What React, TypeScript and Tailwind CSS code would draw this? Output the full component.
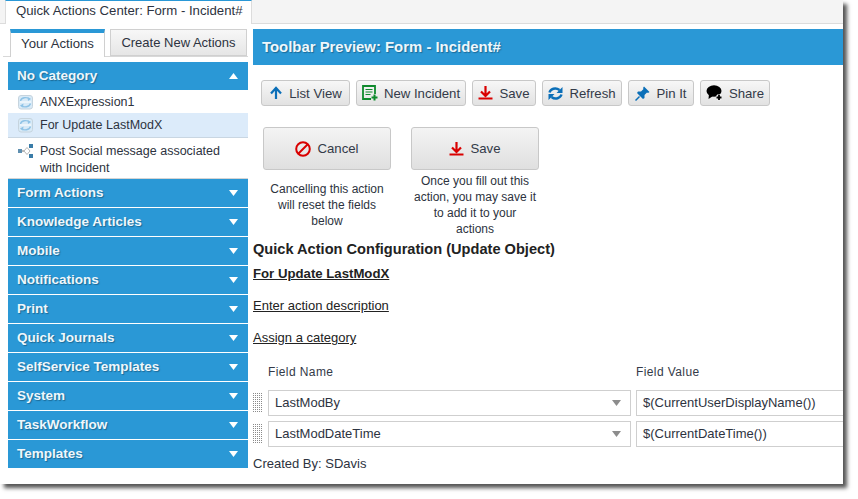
import React from "react";

const Tri = ({ up = false }: { up?: boolean }) => (
  <svg width="9" height="6" viewBox="0 0 9 6" className="shrink-0">
    <path d={up ? "M4.500 0L9 6H0Z" : "M0 0H9L4.500 6Z"} fill="#fff" />
  </svg>
);

const SyncIcon = () => (
  <svg width="15" height="16" viewBox="0 0 15 16" className="shrink-0">
    <rect x="0.500" y="1.500" width="14" height="13.500" rx="2.500" fill="#d8eaf7" stroke="#c6d4de" />
    <path d="M2.500 7C3 3.500 8.500 2.500 12 5M12.500 9.500C11.500 13 6 14 3 11.500" fill="none" stroke="#8fc3e6" strokeWidth="1.400" />
    <path d="M2 8H13" stroke="#fff" strokeWidth="1" />
    <path d="M9.500 3L13 5L10 7M5.500 9.500L2 11.500L5 13.500" fill="#8fc3e6" />
  </svg>
);

const WorkflowIcon = () => (
  <svg width="16" height="14" viewBox="0 0 16 14" className="shrink-0">
    <rect x="0" y="5" width="4" height="4" fill="#5f8fb0" />
    <path d="M4 7H6" stroke="#777" />
    <path d="M9 3.500L12 7L9 10.500L6 7Z" fill="#fff" stroke="#b5b5b5" />
    <rect x="11" y="0" width="4" height="4" fill="#3a7ca8" />
    <rect x="11" y="10" width="4" height="4" fill="#3a7ca8" />
  </svg>
);

const UpArrow = () => (
  <svg width="14" height="14" viewBox="0 0 14 14">
    <path d="M7 13V2.500M2 7.500L7 2L12 7.500" fill="none" stroke="#0b6fb8" strokeWidth="2.200" />
  </svg>
);

const NewIcon = () => (
  <svg width="16" height="16" viewBox="0 0 16 16">
    <path d="M9 14H1V1H13V9" fill="none" stroke="#0f8a2d" strokeWidth="1.800" />
    <path d="M3.500 4.500H10.500M3.500 7H10.500M3.500 9.500H8.500" stroke="#0f8a2d" strokeWidth="1.200" />
    <path d="M12.500 9.500V15.500M9.500 12.500H15.500" stroke="#0f8a2d" strokeWidth="2" />
  </svg>
);

const SaveIcon = () => (
  <svg width="15" height="14" viewBox="0 0 15 14">
    <path d="M7.500 0V9M3 5.500L7.500 10L12 5.500" fill="none" stroke="#d90000" strokeWidth="2.200" />
    <path d="M0.500 12.500H14.500" fill="none" stroke="#d90000" strokeWidth="2" />
  </svg>
);

const RefreshIcon = () => (
  <svg width="15" height="15" viewBox="0 0 15 15">
    <path d="M1.500 6.500C2.500 3 7.500 0.800 11.500 4" fill="none" stroke="#0b6fb8" strokeWidth="2.400" />
    <path d="M13.500 8.500C12.500 12 7.500 14.200 3.500 11" fill="none" stroke="#0b6fb8" strokeWidth="2.400" />
    <path d="M14.500 1V7H8.500Z M0.500 14V8H6.500Z" fill="#0b6fb8" />
  </svg>
);

const PinIcon = () => (
  <svg width="15" height="15" viewBox="0 0 15 15">
    <path d="M9 0.500L14.500 6L13 7L12 6.500L9.500 9L9.500 12L8 13L2 7L3 5.500L6 5.500L8.500 3L8 2Z" fill="#0b6fb8" />
    <path d="M4.500 10.500L0.500 14.500" stroke="#0b6fb8" strokeWidth="1.500" />
  </svg>
);

const ShareIcon = () => (
  <svg width="17" height="16" viewBox="0 0 17 16">
    <ellipse cx="8" cy="6" rx="7.500" ry="5.800" fill="#000" />
    <path d="M3 9L2.500 14L7 11Z" fill="#000" />
    <path d="M13 9.500V15.500M10 12.500H16" stroke="#f0f0f0" strokeWidth="4" />
    <path d="M13 10V15M10.500 12.500H15.500" stroke="#000" strokeWidth="1.800" />
  </svg>
);

const CancelIcon = () => (
  <svg width="16" height="16" viewBox="0 0 16 16">
    <circle cx="8" cy="8" r="6.800" fill="none" stroke="#d90000" strokeWidth="2" />
    <path d="M3.500 12.500L12.500 3.500" stroke="#d90000" strokeWidth="2" />
  </svg>
);

const Grip = ({ id }: { id: string }) => (
  <svg width="11" height="20" viewBox="0 0 11 20" className="shrink-0">
    <defs>
      <pattern id={id} width="2" height="2" patternUnits="userSpaceOnUse">
        <rect width="1" height="1" fill="#8a8a8a" />
      </pattern>
    </defs>
    <rect width="10" height="20" fill={`url(#${id})`} />
  </svg>
);

const Chevron = () => (
  <svg width="9" height="6" viewBox="0 0 9 6" className="shrink-0">
    <path d="M0 0H9L4.500 6Z" fill="#8c8c8c" />
  </svg>
);

const categories = [
  "Form Actions",
  "Knowledge Articles",
  "Mobile",
  "Notifications",
  "Print",
  "Quick Journals",
  "SelfService Templates",
  "System",
  "TaskWorkflow",
  "Templates",
];

const ToolButton = ({ w, icon, label }: { w: string; icon: React.ReactNode; label: string }) => (
  <div
    className={`${w} flex h-[26px] items-center justify-center gap-[6px] rounded-[3px] border border-[#c8c8c8] bg-gradient-to-b from-[#f7f7f7] to-[#e2e2e2] text-[13.2px] text-[#333a48]`}
  >
    {icon}
    <span className="pt-[1px]">{label}</span>
  </div>
);

const BigButton = ({ icon, label }: { icon: React.ReactNode; label: string }) => (
  <div className="flex h-[43px] w-[128px] items-center justify-center gap-[6px] rounded-[3px] border border-[#c8c8c8] bg-gradient-to-b from-[#f4f4f4] to-[#dfdfdf] text-[13.2px] text-[#333a48]">
    {icon}
    <span>{label}</span>
  </div>
);

export default function App() {
  return (
    <div className="h-[499px] w-[858px] overflow-hidden bg-white font-['Liberation_Sans',Arial,sans-serif]">
      <div className="flex h-[484px] w-[843px] flex-col bg-white shadow-[4px_4px_4px_#555]">
        <div className="flex h-[24px] shrink-0 border-b border-[#dcdcdc] bg-[#f4f4f4] pl-[5px]">
          <div className="h-[24px] w-[247px] border-t border-r border-l border-t-[#2a98d6] border-r-[#dcdcdc] border-l-[#dcdcdc] bg-white pl-[10px] text-[13.2px] leading-[20px] whitespace-nowrap text-[#2d3340]">
            Quick Actions Center: Form - Incident#
          </div>
        </div>

        <div className="flex min-h-0 flex-1 gap-[5px] pl-[8px]">
          <div className="flex w-[240px] shrink-0 flex-col">
            <div className="relative mt-[5px] flex h-[28px] gap-[5px] pl-[2px]">
              <div className="absolute top-[27px] -left-[5px] h-px w-[245px] bg-[#d8d8d8]" />
              <div className="relative z-10 h-[28px] w-[95px] border-t-[4px] border-r border-l border-t-[#2a98d6] border-r-[#d0d0d0] border-l-[#d0d0d0] bg-white text-center text-[13.2px] leading-[21px] text-[#2d3340]">
                Your Actions
              </div>
              <div className="h-[27px] w-[137px] border border-[#d0d0d0] bg-gradient-to-b from-[#f7f7f7] to-[#e6e6e6] text-center text-[13px] leading-[26px] text-[#2d3340]">
                Create New Actions
              </div>
            </div>

            <div className="mt-[5px] flex h-[28px] items-center justify-between bg-[#2a98d6] pr-[10px] pl-[9px] text-[13.5px] font-bold text-[#eef7fc] [text-shadow:1px_1px_1px_#1c6a96]">
              <span>No Category</span>
              <Tri up />
            </div>
            <div className="flex h-[23px] items-center gap-[7px] pl-[10px] text-[12.5px] text-[#2d3340]">
              <SyncIcon />
              <span className="pt-[2px]">ANXExpression1</span>
            </div>
            <div className="flex h-[25px] items-center gap-[7px] border-b border-[#c9d6e2] bg-[#dcebfa] pl-[10px] text-[12.5px] text-[#2d3340]">
              <SyncIcon />
              <span className="pt-[1px]">For Update LastModX</span>
            </div>
            <div className="flex h-[41px] gap-[6px] border-b border-[#d4d4d4] pt-[5px] pl-[10px] text-[12.5px] leading-[17px] text-[#2d3340]">
              <div className="pt-[1px]">
                <WorkflowIcon />
              </div>
              <span>
                Post Social message associated
                <br />
                with Incident
              </span>
            </div>

            <div className="flex flex-col gap-px">
              {categories.map((c) => (
                <div
                  key={c}
                  className="flex h-[28px] items-center justify-between bg-[#2a98d6] pr-[10px] pl-[9px] text-[13.5px] font-bold text-[#eef7fc] [text-shadow:1px_1px_1px_#1c6a96]"
                >
                  <span>{c}</span>
                  <Tri />
                </div>
              ))}
            </div>
          </div>

          <div className="flex min-w-0 flex-1 flex-col">
            <div className="mt-[5px] flex h-[36px] shrink-0 items-center bg-[#2a98d6] pl-[9px] text-[14.9px] font-bold text-[#eef7fc] [text-shadow:1px_1px_1px_#1c6a96]">
              Toolbar Preview: Form - Incident#
            </div>

            <div className="mt-[15px] flex gap-[6px] pl-[8px]">
              <ToolButton w="w-[89px]" icon={<UpArrow />} label="List View" />
              <ToolButton w="w-[110px]" icon={<NewIcon />} label="New Incident" />
              <ToolButton w="w-[64px]" icon={<SaveIcon />} label="Save" />
              <ToolButton w="w-[80px]" icon={<RefreshIcon />} label="Refresh" />
              <ToolButton w="w-[66px]" icon={<PinIcon />} label="Pin It" />
              <ToolButton w="w-[70px]" icon={<ShareIcon />} label="Share" />
            </div>

            <div className="mt-[21px] flex gap-[20px] pl-[10px]">
              <div className="flex w-[128px] flex-col items-center">
                <BigButton icon={<CancelIcon />} label="Cancel" />
                <div className="mt-[11px] w-[118px] text-center text-[12px] leading-[16px] text-[#2d3340]">
                  Cancelling this action will reset the fields below
                </div>
              </div>
              <div className="flex w-[128px] flex-col items-center">
                <BigButton icon={<SaveIcon />} label="Save" />
                <div className="mt-[3px] w-[128px] text-center text-[12px] leading-[16px] text-[#2d3340]">
                  Once you fill out this
                  <br />
                  action, you may save it
                  <br />
                  to add it to your
                  <br />
                  actions
                </div>
              </div>
            </div>

            <div className="mt-[3px] text-[14.6px] leading-[18px] font-bold text-[#222]">
              Quick Action Configuration (Update Object)
            </div>
            <div className="mt-[7px] text-[13.2px] leading-[18px] font-bold text-[#222] underline">For Update LastModX</div>
            <div className="mt-[14px] text-[13px] leading-[18px] text-[#222] underline">Enter action description</div>
            <div className="mt-[14px] text-[13px] leading-[18px] text-[#222] underline">Assign a category</div>

            <div className="mt-[17px] flex text-[12px] leading-[16px] text-[#333a48]">
              <div className="ml-[15px] w-[368px] tracking-[0.4px]">Field Name</div>
              <div className="tracking-[0.4px]">Field Value</div>
            </div>

            <div className="mt-[10px] flex flex-col gap-[5px]">
              {[
                ["g1", "LastModBy", "$(CurrentUserDisplayName())"],
                ["g2", "LastModDateTime", "$(CurrentDateTime())"],
              ].map(([id, a, b]) => (
                <div key={a} className="flex items-center">
                  <Grip id={id} />
                  <div className="ml-[4px] flex h-[26px] w-[363px] shrink-0 items-center justify-between border border-[#cfcfcf] pr-[9px] pl-[6px] text-[13px] text-[#2d3340]">
                    <span>{a}</span>
                    <Chevron />
                  </div>
                  <div className="ml-[5px] flex h-[26px] flex-1 items-center border-y border-l border-[#cfcfcf] pl-[6px] text-[13px] text-[#2d3340]">
                    {b}
                  </div>
                </div>
              ))}
            </div>

            <div className="mt-[9px] text-[13px] leading-[16px] text-[#2d3340]">Created By: SDavis</div>
          </div>
        </div>
      </div>
    </div>
  );
}
